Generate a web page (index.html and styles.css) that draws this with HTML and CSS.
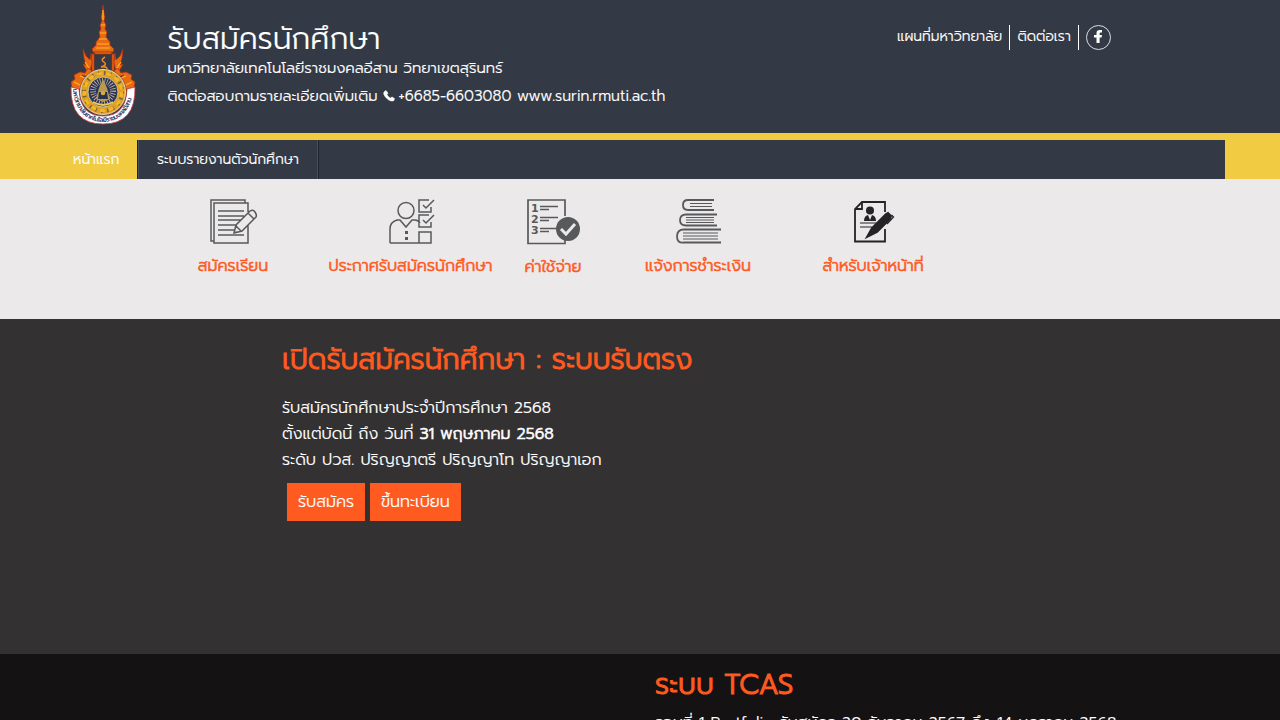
FILE: index.html
```html
<!DOCTYPE html>
<html lang="th">
<head>
<meta charset="utf-8">
<title>รับสมัครนักศึกษา</title>
<link rel="stylesheet" href="styles.css">
</head>
<body>
<header class="header">
  <svg class="logo" viewBox="0 0 66 120">
    <g fill="#e86a12" stroke="#b92e0c" stroke-width=".7">
      <path d="M33 0l1 8 1 4-1 4 2 4-1 4 2 3-1 5 4 5v3l4 4-1 3H23l-1-3 4-4v-3l4-5-1-5 2-3-1-4 2-4-1-4 1-4z"/>
      <path d="M24 47h18l-1 2H25zM22 49h2v26h-2zM42 49h2v26h-2z"/>
      <path d="M13 44l3 7 4 4 1-7 1 10-2 8 3 5-5-3-5-9 3 1-2-7zM53 44l-3 7-4 4-1-7-1 10 2 8-3 5 5-3 5-9-3 1 2-7z"/>
      <path d="M23 65l-5 7-6-2 5 5-5 7-4 3-6-2-1-6 4-3-1-4 6-3 5 1 3-5 4 3zM43 65l5 7 6-2-5 5 5 7 4 3 6-2 1-6-4-3 1-4-6-3-5 1-3-5-4 3z"/>
    </g>
    <path d="M33 5v10M31 20h4M30 28h6M29 34h8M27 39h12M26 43h14M15 57l4 6M51 57l-4 6M4 77l6 3M62 77l-6 3M10 71l5 2M56 71l-5 2" fill="none" stroke="#ffb627" stroke-width="1.200"/>
    <path d="M35 52q-5 3-1 5 4 3-3 5 6-1 6 2t-7 4" fill="none" stroke="#f58a22" stroke-width="1.500"/>
    <path d="M1 82q-1 37 32 37t32-37l-8 2q-1 27-24 27T9 84z" fill="#fff" stroke="#c73342" stroke-width=".8"/>
    <circle cx="33" cy="87" r="23.500" fill="#7c4a31"/>
    <circle cx="33" cy="87" r="22.500" fill="#dba127" stroke="#fff" stroke-width=".7"/>
    <circle cx="33" cy="87" r="19" fill="none" stroke="#75623b" stroke-width="4" stroke-dasharray="1.500 4.500"/>
    <circle cx="33" cy="87" r="18.500" fill="none" stroke="#f4b626" stroke-width="3" stroke-dasharray="5 4"/>
    <circle cx="33" cy="87" r="15" fill="#2b315a" stroke="#e8d59d" stroke-width=".8"/>
    <circle cx="33" cy="86" r="10" fill="none" stroke="#bdb591" stroke-width="6" stroke-dasharray=".8 1.500"/>
    <path d="M33 74l4 9 3 11-7 3-7-3 3-11z" fill="#b89a50"/>
    <path d="M29 87h8l1 7H28z" fill="#29304d"/><circle cx="33" cy="88" r="2.300" fill="#d3a94a"/>
    <path d="M23 97q10 6 20 0" fill="none" stroke="#efca52" stroke-width="2"/>
    <path id="ribbon" d="M3 84C4 105 17 117 33 117S62 105 63 84" fill="none"/>
    <text class="logo-text"><textPath href="#ribbon" textLength="90">มหาวิทยาลัยเทคโนโลยีราชมงคลอีสาน</textPath></text>
  </svg>
  <div class="brand">
    <h1 class="title">รับสมัครนักศึกษา</h1>
    <p class="university">มหาวิทยาลัยเทคโนโลยีราชมงคลอีสาน วิทยาเขตสุรินทร์</p>
    <p class="contact"><span>ติดต่อสอบถามรายละเอียดเพิ่มเติม</span>
      <svg class="phone" viewBox="0 0 12 12"><path d="M1 2l2-1.500L5 3.200 3.900 4.500Q5 7 7.500 8.100L9 7l2.500 1.600-.8 2.100q-2 1-5-.8Q1.500 7 .7 4z" fill="#fff" stroke="#fff" stroke-width=".6"/></svg>
      <span>+6685-6603080 www.surin.rmuti.ac.th</span></p>
  </div>
  <div class="links">
    <a class="map-link">แผนที่มหาวิทยาลัย</a><a class="contact-link">ติดต่อเรา</a>
    <svg class="facebook" viewBox="0 0 25 25"><circle cx="12.500" cy="12.500" r="12" fill="none" stroke="#dcdfe2"/><path d="M10.500 18v-5.500H8V10h2.500V8.200q0-3.200 3.300-3.200H16v2.400h-1.400q-1 0-1 1V10h2.400l-.4 2.500h-2V18z" fill="#fff"/></svg>
  </div>
</header>
<nav class="nav-band"><div class="nav">
  <a class="home">หน้าแรก</a><a class="report">ระบบรายงานตัวนักศึกษา</a>
</div></nav>
<section class="services">
  <a class="service s1">
    <svg class="icon" width="48" height="46" viewBox="0 0 48 46" fill="none" stroke="#58595b" stroke-width="1.500"><path d="M4 42H1V1h34v3M38 13V4H4v40h34V26M8 12h26M8 17h26M8 21h23M8 26h19M8 31h16M8 36h26M24 34l2-8 14-14q3-2 5 1t1 5L32 32zM26 27l5 5M38 14l6 6M24 34l3-1"/></svg>
    <span>สมัครเรียน</span></a>
  <a class="service s2">
    <svg class="icon" width="46" height="46" viewBox="0 0 46 46" fill="none" stroke="#58595b" stroke-width="1.500"><circle cx="17" cy="11.500" r="8"/><path d="M1 44V30q0-7 7-9h3l6 7 6-7h3q3 0 5 3M1 44h30M42 8v5H30V1h10M34 6l3 3 8-8M42 23v5H30V16h10M34 21l3 3 8-8M30 33h12v11H30z"/><path d="M16 32h3v3h-3zM16 38h3v3h-3z" fill="#58595b" stroke="none"/></svg>
    <span>ประกาศรับสมัครนักศึกษา</span></a>
  <a class="service s3">
    <svg class="icon" width="54" height="46" viewBox="0 0 54 46" fill="none" stroke="#58595b" stroke-width="1.700"><path d="M38 17V1H1v43.500h37V40M13 7.500h18M13 10.500h9M13 18.500h18M13 21.500h9M13 29.500h16M13 32.500h9"/><circle cx="41" cy="30" r="12" fill="#58595b" stroke="none"/><path d="M34 30l5 5 9-10" stroke="#ebe9ea" stroke-width="3"/><g class="digits"><text x="4" y="13">1</text><text x="4" y="24">2</text><text x="4" y="35">3</text></g></svg>
    <span>ค่าใช้จ่าย</span></a>
  <a class="service s4">
    <svg class="icon" width="46" height="46" viewBox="0 0 46 46" fill="none" stroke="#58595b" stroke-width="1.800"><path d="M38 1H12q-5 0-5 5t5 5h26M41 15.500H10q-6 0-6 5.500t6 5.500h31M45 30.500H8q-7 0-7 7t7 6h37"/><path d="M14 4.500h22M14 7.500h22M10 18.500h28M10 21h28M10 23.500h28M7 34h35M7 37h35M7 40h35" stroke-width="1.200"/></svg>
    <span>แจ้งการชำระเงิน</span></a>
  <a class="service s5">
    <svg class="icon" width="42" height="46" viewBox="0 0 42 46" fill="none" stroke="#252326" stroke-width="1.800"><path d="M32 13V3H9L2 10v32.500h30V30M9 3v7H2"/><path d="M7 24h16M7 28h12" stroke-width="1.200"/><circle cx="17" cy="11.500" r="4" fill="#252326" stroke="none"/><path d="M11 22q0-5 4-6l2 5 2-5q4 1 4 6z" fill="#252326" stroke="none"/><path d="M14 38l5-9 14-14 2-1 3 3-1 3-13 13z" fill="#252326" stroke="#252326" stroke-width="2"/><path d="M34 25l6.500-7-2-2" stroke-width="1.300"/></svg>
    <span>สำหรับเจ้าหน้าที่</span></a>
</section>
<section class="admission">
  <h2>เปิดรับสมัครนักศึกษา : ระบบรับตรง</h2>
  <p class="line year">รับสมัครนักศึกษาประจำปีการศึกษา 2568</p>
  <p class="line">ตั้งแต่บัดนี้ ถึง วันที่ <b>31 พฤษภาคม 2568</b></p>
  <p class="line">ระดับ ปวส. ปริญญาตรี ปริญญาโท ปริญญาเอก</p>
  <div class="buttons"><a class="button apply">รับสมัคร</a><a class="button register">ขึ้นทะเบียน</a></div>
</section>
<section class="tcas">
  <h2>ระบบ TCAS</h2>
  <p class="line round">รอบที่ 1 Portfolio รับสมัคร 20 ธันวาคม 2567 ถึง 14 มกราคม 2568</p>
</section>
</body>
</html>
```

FILE: styles.css
```css
*{box-sizing:border-box}
body{margin:0;height:720px;overflow:hidden;font-family:Prompt,Kanit,"Noto Sans Thai","Noto Sans",sans-serif;font-weight:300;font-size:16px;color:#fff;background:#141213;-webkit-text-stroke:.15px currentColor}
h1,h2,p{margin:0;font-weight:300;white-space:nowrap}
a{white-space:nowrap}
.header{display:flex;height:133px;background:#343a45;padding-left:70px}
.logo{width:66px;height:120px;margin-top:5px}
.logo-text{font-size:6.5px;fill:#252b60;font-weight:500}
.brand{width:760px;padding:21px 0 0 31.5px}
.title{font-size:30px;line-height:36px}
.university,.contact{font-size:15px;line-height:28px;height:28px}
.university{margin-top:-3px}
.contact{display:flex;align-items:center}
.phone{width:12px;height:12px;margin:0 4px 0 5px}
.links{display:flex;padding-top:25px;font-size:14px;line-height:23px}
.links a{height:25px;border-right:1px solid #fff}
.map-link{width:114px;padding-left:1px}
.contact-link{width:69px;padding-left:7.5px}
.facebook{width:25px;height:25px;margin-left:7px}
.nav-band{height:46px;background:#f1cb42;padding-top:7px}
.nav{display:flex;width:1225px;height:39px;background:#343a45;font-size:14px;line-height:39px}
.home{width:137px;padding-left:73px;background:#f1cb42}
.report{width:182px;padding-left:19px;border-left:1px solid #1e242d;border-right:1px solid #1e242d;box-shadow:inset 1px 0 #465261,inset -1px 0 #465261}
.services{display:flex;height:140px;background:#ebe9ea;padding:19px 0 0 168px;color:#ff5a1f}
.service{display:flex;flex-direction:column;align-items:center;line-height:28px}
.service span,h2,b{font-weight:300;-webkit-text-stroke:.6px currentColor}
.icon{flex:none;margin:.5px 0 7.5px 2px}
.s1{width:130px}.s2{width:225px}.s3{width:60px}.s4{width:230px}.s5{width:120px}
.s3 .icon,.s5 .icon{margin-left:1px}
.s3 .icon{margin-bottom:8.5px}
.digits{font:700 11px "DejaVu Sans",sans-serif;fill:#58595b;stroke:none;-webkit-text-stroke:0}
.admission{height:335px;background:#333132;padding:21px 0 0 282px}
h2{color:#ff5a1f;font-size:28px;line-height:40px;-webkit-text-stroke-width:1px}
.line{line-height:26px}
.year{margin-top:15px}
.buttons{display:flex;gap:5px;margin:10px 0 0 5px}
.button{height:38px;background:#ff5a1f;line-height:38px;padding-left:11px}
.apply{width:78px}.register{width:91px}
.tcas{height:66px;padding:11px 0 0 655px;overflow:hidden}
.round{margin-top:5px}
```
